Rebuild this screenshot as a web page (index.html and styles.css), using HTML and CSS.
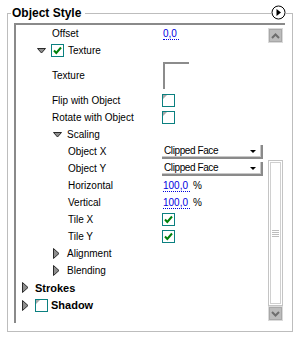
FILE: index.html
```html
<!DOCTYPE html>
<html lang="en">
  <head>
    <meta charset="UTF-8" />
    <title>Object Style</title>
    <link rel="stylesheet" href="styles.css">
  </head>
  <body>
    <div class="group">
      <div class="group-title">Object Style</div>
      <div class="menu-btn">
        <svg width="15" height="15" viewBox="0 0 15 15">
          <circle cx="7.5" cy="7.5" r="6.5" fill="#fff" stroke="#000" />
          <polygon points="5.5,4 10,7.5 5.5,11" fill="#000" />
        </svg>
      </div>

      <div class="panel">
        <div class="list">
          <div class="row">
            <div class="label p36">Offset</div>
            <div class="value"><span class="num">0,0</span></div>
          </div>

          <div class="row">
            <div class="label p21">
              <svg class="twisty-down" width="9" height="6" viewBox="0 0 9 6"><polygon points="0.5,0.5 8.5,0.5 4.5,5" fill="#8e8e8e" stroke="#2a2a2a" /></svg>
              <span class="check checked">
                <svg width="11" height="11" viewBox="0 0 11 11"><path d="M2 5.5 L4.3 8 L9 2.5" fill="none" stroke="#00800a" stroke-width="2" /></svg>
              </span>
              <span class="after-check">Texture</span>
            </div>
          </div>

          <div class="row tall">
            <div class="label p36">Texture</div>
            <div class="value"><div class="swatch"></div></div>
          </div>

          <div class="row">
            <div class="label p36">Flip with Object</div>
            <div class="value"><span class="check"></span></div>
          </div>
          <div class="row">
            <div class="label p36">Rotate with Object</div>
            <div class="value"><span class="check"></span></div>
          </div>

          <div class="row">
            <div class="label p37">
              <svg class="twisty-down" width="9" height="6" viewBox="0 0 9 6"><polygon points="0.5,0.5 8.5,0.5 4.5,5" fill="#8e8e8e" stroke="#2a2a2a" /></svg>
              Scaling
            </div>
          </div>

          <div class="row">
            <div class="label p52">Object X</div>
            <div class="value">
              <div class="popup">Clipped Face<span class="popup-arrow"></span></div>
            </div>
          </div>
          <div class="row">
            <div class="label p52">Object Y</div>
            <div class="value">
              <div class="popup">Clipped Face<span class="popup-arrow"></span></div>
            </div>
          </div>
          <div class="row">
            <div class="label p52">Horizontal</div>
            <div class="value"><span class="num">100,0</span><span class="unit">%</span></div>
          </div>
          <div class="row">
            <div class="label p52">Vertical</div>
            <div class="value"><span class="num">100,0</span><span class="unit">%</span></div>
          </div>
          <div class="row">
            <div class="label p52">Tile X</div>
            <div class="value">
              <span class="check checked">
                <svg width="11" height="11" viewBox="0 0 11 11"><path d="M2 5.5 L4.3 8 L9 2.5" fill="none" stroke="#00800a" stroke-width="2" /></svg>
              </span>
            </div>
          </div>
          <div class="row">
            <div class="label p52">Tile Y</div>
            <div class="value">
              <span class="check checked">
                <svg width="11" height="11" viewBox="0 0 11 11"><path d="M2 5.5 L4.3 8 L9 2.5" fill="none" stroke="#00800a" stroke-width="2" /></svg>
              </span>
            </div>
          </div>

          <div class="row">
            <div class="label p37">
              <svg class="twisty-right" width="7" height="11" viewBox="0 0 7 11"><polygon points="0.5,0.5 6,5.5 0.5,10.5" fill="#8e8e8e" stroke="#2a2a2a" /></svg>
              Alignment
            </div>
          </div>
          <div class="row">
            <div class="label p37">
              <svg class="twisty-right" width="7" height="11" viewBox="0 0 7 11"><polygon points="0.5,0.5 6,5.5 0.5,10.5" fill="#8e8e8e" stroke="#2a2a2a" /></svg>
              Blending
            </div>
          </div>

          <div class="row section">
            <div class="label p6">
              <svg class="twisty-right top" width="7" height="11" viewBox="0 0 7 11"><polygon points="0.5,0.5 6,5.5 0.5,10.5" fill="#8e8e8e" stroke="#2a2a2a" /></svg>
              Strokes
            </div>
          </div>
          <div class="row section">
            <div class="label p6">
              <svg class="twisty-right top" width="7" height="11" viewBox="0 0 7 11"><polygon points="0.5,0.5 6,5.5 0.5,10.5" fill="#8e8e8e" stroke="#2a2a2a" /></svg>
              <span class="check"></span>
              <span class="gap3">Shadow</span>
            </div>
          </div>
        </div>

        <div class="scrollbar">
          <div class="arrow">
            <svg width="9" height="6" viewBox="0 0 9 6"><path d="M1 5 L4.5 1.5 L8 5" fill="none" stroke="#6e6e6e" stroke-width="2" /></svg>
          </div>
          <div class="track">
            <div class="thumb">
              <div class="grip"></div>
            </div>
          </div>
          <div class="arrow">
            <svg width="9" height="6" viewBox="0 0 9 6"><path d="M1 1 L4.5 4.5 L8 1" fill="none" stroke="#6e6e6e" stroke-width="2" /></svg>
          </div>
        </div>
      </div>
    </div>
  </body>
</html>
```

FILE: styles.css
```css
* {
  margin: 0;
  padding: 0;
  box-sizing: border-box;
}

body {
  font-family: "Liberation Sans", Arial, sans-serif;
  font-size: 10px;
  color: #000;
  background-color: #fff;
  width: 298px;
  height: 337px;
  overflow: hidden;
}

/* outer group box */
.group {
  position: relative;
  margin: 13px 0 0 7px;
  width: 286px;
  height: 319px;
  border: 1px solid #bdbdbd;
  padding: 9px 0 0 6px;
}

.group-title {
  position: absolute;
  left: 3px;
  top: -8px;
  height: 14px;
  line-height: 14px;
  padding: 0 4px 0 1px;
  background-color: #fff;
  font-size: 12px;
  font-weight: bold;
}

.menu-btn {
  position: absolute;
  left: 263px;
  top: -9px;
  width: 15px;
  height: 15px;
  background-color: #fff;
}

.menu-btn svg {
  display: block;
}

/* inner list panel */
.panel {
  display: flex;
  width: 271px;
  height: 300px;
  border-top: 2px solid #8a8a8a;
  border-left: 2px solid #8a8a8a;
}

.list {
  flex: 1;
  display: flex;
  flex-direction: column;
}

.row {
  display: flex;
  align-items: center;
  height: 17px;
}

.row.tall {
  height: 33px;
}

.row.section {
  height: 17.5px;
  font-size: 11px;
  font-weight: bold;
}

.label {
  display: flex;
  align-items: center;
  width: 146px;
  flex-shrink: 0;
  white-space: nowrap;
}

.p6 { padding-left: 6px; }
.p21 { padding-left: 21px; }
.p36 { padding-left: 36px; }
.p37 { padding-left: 37px; }
.p52 { padding-left: 52px; }

.twisty-down {
  display: block;
  margin-right: 5px;
}

.twisty-right {
  display: block;
  margin-right: 7px;
}

.twisty-right.top {
  margin-right: 6px;
}

.gap3 {
  margin-left: 3px;
}

.after-check {
  margin-left: 4px;
}

.value {
  display: flex;
  align-items: center;
  flex: 1;
}

/* blue editable numbers */
.num {
  display: inline-block;
  margin-left: 1px;
  padding-right: 2px;
  line-height: 11px;
  color: #0000e0;
  border-bottom: 1px dotted #0000e0;
}

.unit {
  margin-left: 3px;
}

/* teal checkbox */
.check {
  position: relative;
  display: flex;
  align-items: center;
  justify-content: center;
  width: 13px;
  height: 13px;
  border: 1px solid #0b8080;
  background-color: #fff;
}

.check::before {
  content: "";
  position: absolute;
  left: 0;
  top: 0;
  border-top: 4px solid #a8a8a8;
  border-right: 4px solid transparent;
}

.check.checked::before {
  display: none;
}

.check svg {
  display: block;
}

.swatch {
  width: 26px;
  height: 27px;
  margin-left: 1px;
  border-top: 2px solid #8c8c8c;
  border-left: 2px solid #8c8c8c;
}

/* popup menu */
.popup {
  position: relative;
  width: 101px;
  height: 14px;
  line-height: 12px;
  padding-left: 2px;
  letter-spacing: -0.4px;
  border-right: 2px solid #8a8a8a;
  border-bottom: 2px solid #8a8a8a;
  box-shadow: inset -1px -1px 0 #c8c8c8;
}

.popup-arrow {
  position: absolute;
  right: 5px;
  top: 5px;
  border-top: 3px solid #000;
  border-left: 3px solid transparent;
  border-right: 3px solid transparent;
}

/* scrollbar */
.scrollbar {
  display: flex;
  flex-direction: column;
  width: 15px;
  margin-right: 2px;
  padding: 3px 0 2px;
}

.arrow {
  display: flex;
  align-items: center;
  justify-content: center;
  height: 15px;
  background-color: #bcbcbc;
  border: 1px solid #dadada;
  box-shadow: inset 0 0 0 1px #a8a8a8;
}

.arrow svg {
  display: block;
}

.track {
  flex: 1;
  display: flex;
  flex-direction: column;
  justify-content: flex-end;
}

.thumb {
  display: flex;
  align-items: center;
  justify-content: center;
  height: 146px;
  border: 1px solid #c4c4c4;
  box-shadow: inset 0 0 0 1px #fff, inset 0 0 0 2px #d0d0d0;
}

.grip {
  width: 7px;
  height: 7px;
  background: repeating-linear-gradient(#bdbdbd 0, #bdbdbd 1px, transparent 1px, transparent 2px);
}
```
